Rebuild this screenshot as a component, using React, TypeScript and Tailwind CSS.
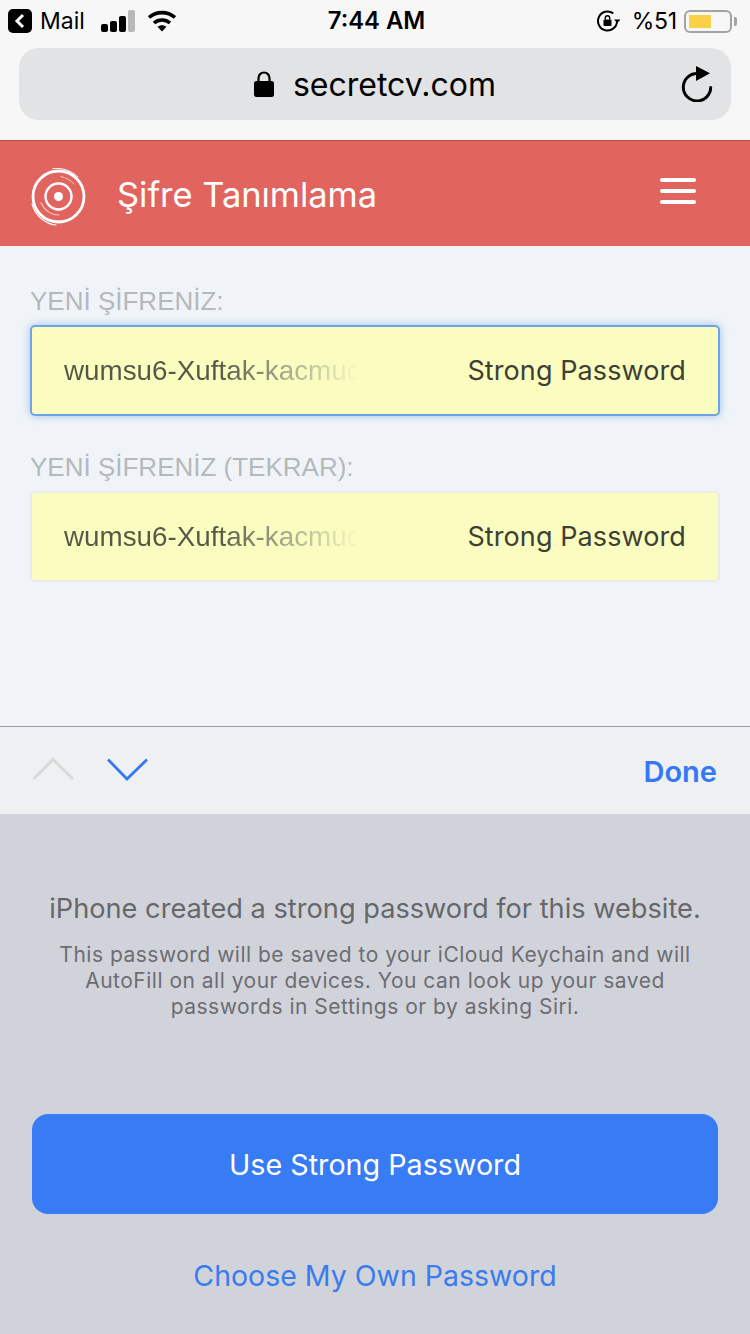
const sf = "font-['Inter','Liberation_Sans',sans-serif]";
const web = "font-['Liberation_Sans',sans-serif]";

function Signal() {
  return (
    <svg width="34" height="22" viewBox="0 0 34 22" className="ml-[16px]">
      <rect x="0" y="14" width="7" height="8" rx="2" fill="#000" />
      <rect x="9" y="11" width="7" height="11" rx="2" fill="#000" />
      <rect x="18" y="6" width="7" height="16" rx="2" fill="#000" />
      <rect x="27" y="0" width="7" height="22" rx="2" fill="#b9b9b9" />
    </svg>
  );
}

function Wifi() {
  return (
    <svg width="28" height="22" viewBox="0 0 28 22" className="ml-[13px]">
      <path d="M1 7.500C8.500 1 19.500 1 27 7.500" fill="none" stroke="#000" strokeWidth="3.600" />
      <path d="M6 13C10.500 9 17.500 9 22 13" fill="none" stroke="#000" strokeWidth="3.600" />
      <path d="M9.500 16.800 14 21.500 18.500 16.800C16 14.600 12 14.600 9.500 16.800Z" fill="#000" />
    </svg>
  );
}

function RotationLock() {
  return (
    <svg width="24" height="22" viewBox="0 0 24 22">
      <path d="M20 11a9.500 9.500 0 1 1-3.800-7.600" fill="none" stroke="#000" strokeWidth="2" />
      <path d="M17 9.500h6.500l-3.200 3.500z" fill="#000" />
      <rect x="6.500" y="9.500" width="8" height="6.500" rx="1" fill="#000" />
      <path d="M8.300 9.500V8a2.200 2.200 0 0 1 4.400 0v1.500" fill="none" stroke="#000" strokeWidth="1.400" />
    </svg>
  );
}

function Battery() {
  return (
    <div className="ml-[7px] flex items-center">
      <div className="flex h-[23px] w-[48px] items-stretch rounded-[6px] border-[2px] border-[#a3a3a3] p-[3px]">
        <div className="w-[22px] bg-[#fad047]" />
      </div>
      <div className="ml-[2px] h-[9px] w-[3px] rounded-r-[2px] bg-[#a3a3a3]" />
    </div>
  );
}

function Lock() {
  return (
    <svg width="20" height="28" viewBox="0 0 20 28">
      <path d="M4.500 13V8a5.500 5.500 0 0 1 11 0v5" fill="none" stroke="#000" strokeWidth="2.200" />
      <rect x="0" y="11" width="20" height="16" rx="2.500" fill="#000" />
    </svg>
  );
}

function Reload() {
  return (
    <svg width="32" height="36" viewBox="0 0 32 36">
      <path d="M28.700 20.500A13.700 13.700 0 1 1 15 6.500" fill="none" stroke="#000" strokeWidth="3" strokeLinecap="round" transform="translate(1 1)" />
      <path d="M15 0 29 7.300 15 15Z" fill="#000" />
    </svg>
  );
}

function Logo() {
  return (
    <svg width="56" height="58" viewBox="0 0 56 58" className="translate-x-[1px] translate-y-[3px]">
      <g fill="none" stroke="#fff" strokeLinecap="round">
        <circle cx="27.500" cy="28.500" r="25.500" strokeWidth="2.800" />
        <circle cx="27.500" cy="28.500" r="13" strokeWidth="2.400" />
        <path d="M22 0.500C30 -0.500 40 2 47 9" strokeWidth="1" />
        <path d="M30 8.500C35 9.500 40 12.500 43 16" strokeWidth="1" stroke="#f7c9c6" />
        <path d="M1 36C4 47 14 56 25 57" strokeWidth="1.200" />
        <path d="M10 35C14 43 21 47 28 47" strokeWidth="1.200" stroke="#f7c9c6" />
      </g>
      <circle cx="27.500" cy="28.500" r="4.500" fill="#fff" />
    </svg>
  );
}

function Menu() {
  return (
    <div className="flex w-[36px] flex-col gap-[7px]">
      <div className="h-[4px] rounded-[2px] bg-white" />
      <div className="h-[4px] rounded-[2px] bg-white" />
      <div className="h-[4px] rounded-[2px] bg-white" />
    </div>
  );
}

function PasswordField({ label, focused }: { label: string; focused?: boolean }) {
  return (
    <div className="flex flex-col">
      <div className={`${web} text-[26px] leading-[30px] text-[#b4b9bd]`}>{label}</div>
      <div
        className={`mt-[9px] flex h-[91px] items-center justify-between rounded-[5px] bg-[#fbfdc0] pl-[32px] pr-[32px] ${
          focused
            ? "border-[2px] border-[#6ba5e7] shadow-[0_0_9px_rgba(102,160,225,0.6)]"
            : "border-[2px] border-[#e9ecea]"
        }`}
      >
        <span className={`${web} w-[296px] overflow-hidden whitespace-nowrap bg-[linear-gradient(90deg,#565846_0%,#565846_52%,#a5a88c_75%,#fbfdc0_100%)] bg-clip-text text-[27.800px] text-transparent`}>
          wumsu6-Xuftak-kacmuc
        </span>
        <span className={`${sf} translate-y-[1px] text-[27px] tracking-[0.1px] text-[#3e4034]`}>Strong Password</span>
      </div>
    </div>
  );
}

export default function App() {
  return (
    <div className={`${sf} flex h-[1334px] w-[750px] flex-col overflow-hidden bg-[#f0f4f8]`}>
      <div className="flex h-[140px] flex-col bg-[#f7f7f7]">
        <div className="relative mb-[6px] flex h-[42px] items-center pl-[8px] pr-[13px]">
          <div className="flex h-[24px] w-[24px] items-center justify-center rounded-[5px] bg-black">
            <svg width="12" height="16" viewBox="0 0 12 16">
              <path d="M9 2 3 8l6 6" fill="none" stroke="#fff" strokeWidth="3" />
            </svg>
          </div>
          <span className="ml-[8px] text-[23px] leading-none text-black">Mail</span>
          <Signal />
          <Wifi />
          <span className="absolute left-[3px] right-0 top-[7px] text-center text-[23.800px] font-semibold leading-[28px] text-black">7:44 AM</span>
          <div className="ml-auto flex items-center">
            <RotationLock />
            <span className="ml-[11px] text-[23px] leading-none tracking-[-0.2px] text-black">%51</span>
            <Battery />
          </div>
        </div>
        <div className="relative mx-[19px] flex h-[72px] items-center justify-center rounded-[20px] bg-[#e2e3e5]">
          <Lock />
          <span className="ml-[19px] translate-y-[1px] text-[32px] leading-none text-black">secretcv.com</span>
          <div className="absolute right-[18px] top-[18px]">
            <Reload />
          </div>
        </div>
      </div>

      <div className="flex h-[106px] items-center border-t border-[#b84f4c] bg-[#e1645f] pl-[30px] pr-[54px]">
        <Logo />
        <span className="ml-[31px] translate-y-[2px] text-[34.400px] leading-none text-white">Şifre Tanımlama</span>
        <div className="ml-auto -translate-y-[3px]">
          <Menu />
        </div>
      </div>

      <div className="flex flex-1 flex-col gap-[36px] bg-[#f0f4f8] px-[30px] pt-[40px]">
        <PasswordField label="YENİ ŞİFRENİZ:" focused />
        <PasswordField label="YENİ ŞİFRENİZ (TEKRAR):" />
      </div>

      <div className="flex h-[88px] items-center border-t border-[#9b9b9b] bg-[#eff0f2] pl-[32px] pr-[33px]">
        <svg width="116" height="26" viewBox="0 0 116 26" className="-translate-y-[2px]">
          <path d="M1.500 23 21 3.500 41 23" fill="none" stroke="#d9d9d9" strokeWidth="2.800" />
          <path d="M76 3.500 95 23 115 3.500" fill="none" stroke="#3478f6" strokeWidth="2.800" />
        </svg>
        <span className="ml-auto translate-y-[1px] text-[29px] font-semibold leading-none text-[#3478f6]">Done</span>
      </div>

      <div className="flex h-[520px] flex-col items-center bg-[#d1d3da] px-[32px]">
        <div className="mt-[78px] text-[27.200px] leading-[34px] text-[#66676b]">iPhone created a strong password for this website.</div>
        <div className="mt-[16px] w-[680px] text-center text-[21px] leading-[26px] tracking-[0.5px] text-[#6c6d72]">
          This password will be saved to your iCloud Keychain and will AutoFill on all your devices. You can look up your saved passwords in Settings or by asking Siri.
        </div>
        <button className="mt-[94px] flex h-[100px] w-full items-center justify-center rounded-[16px] bg-[#387cf5] text-[28.700px] text-white">
          <span className="translate-y-[1px]">Use Strong Password</span>
        </button>
        <div className="mt-[44px] text-[28.500px] leading-[36px] text-[#3a7bee]">Choose My Own Password</div>
      </div>
    </div>
  );
}
